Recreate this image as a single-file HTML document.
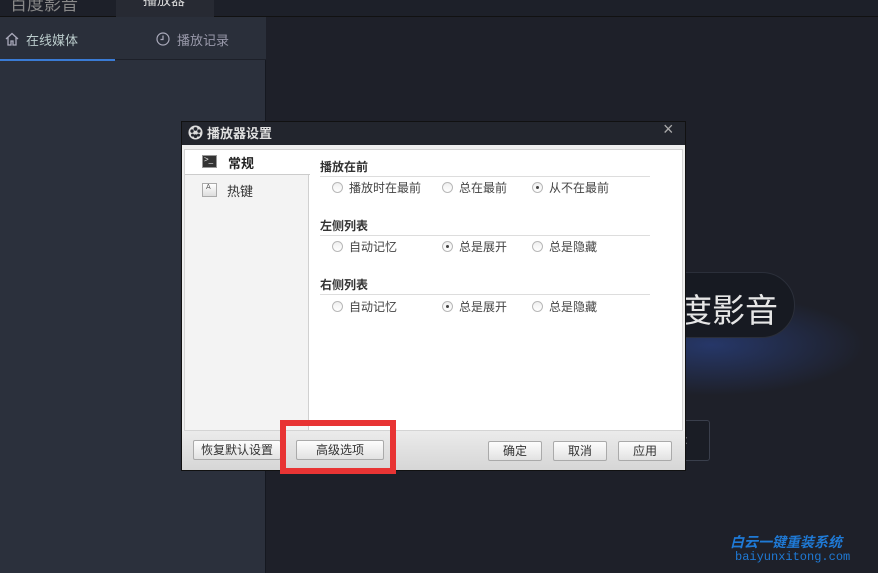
<!DOCTYPE html>
<html><head><meta charset="utf-8"><style>
*{margin:0;padding:0;box-sizing:border-box}
body{width:878px;height:573px;overflow:hidden;position:relative;background:#1e2029;font-family:"Liberation Sans","Noto Sans CJK SC",sans-serif;font-size:12px}
.a{position:absolute}
.t{white-space:nowrap}
.rad{position:absolute;width:11px;height:11px;border:1px solid #b8b8b8;border-radius:50%;background:linear-gradient(#f0f0f0,#fff)}
.rad.on::after{content:"";position:absolute;left:3px;top:3px;width:3px;height:3px;border-radius:50%;background:#444}
.lbl{position:absolute;color:#444;font-size:12px;white-space:nowrap}
.h{position:absolute;font-weight:bold;color:#333;font-size:12px}
.line{position:absolute;height:1px;background:#ddd;left:320px;width:330px}
.btn{position:absolute;height:20px;border:1px solid #aaa;border-radius:2px;background:linear-gradient(#fdfdfd,#e2e2e2);color:#333;text-align:center;line-height:18px;font-size:12px}
</style></head><body>
<div class="a" style="left:0;top:0;width:878px;height:17px;background:#1d2029;border-bottom:1px solid #111"></div>
<div class="a t" style="left:10px;top:-10px;color:#888;font-size:17px">百度影音</div>
<div class="a" style="left:116px;top:0;width:98px;height:17px;background:#272a33"></div>
<div class="a t" style="left:143px;top:-10px;color:#ddd;font-size:14px">播放器</div>
<div class="a" style="left:0;top:17px;width:266px;height:556px;background:#2b303c;border-right:1px solid #151820"></div>
<div class="a" style="left:0;top:17px;width:266px;height:43px;background:#2a2f3a;border-bottom:1px solid #1d2029"></div>
<div class="a" style="left:0;top:59px;width:115px;height:2px;background:#3a7bd5"></div>
<svg class="a" style="left:5px;top:32px" width="14" height="14" viewBox="0 0 14 14"><path d="M1 7L7 1.5 13 7M3 5.5V13h3V9h2v4h3V5.5" fill="none" stroke="#aab" stroke-width="1.3"/></svg>
<div class="a t" style="left:26px;top:30px;color:#bcc;font-size:13px">在线媒体</div>
<svg class="a" style="left:156px;top:32px" width="14" height="14" viewBox="0 0 14 14"><circle cx="7" cy="7" r="6" fill="none" stroke="#aab" stroke-width="1.2"/><path d="M7 3.5V7.5H4.5" fill="none" stroke="#aab" stroke-width="1.2"/></svg>
<div class="a t" style="left:177px;top:30px;color:#99a;font-size:13px">播放记录</div>
<div class="a" style="left:640px;top:300px;width:238px;height:100px;background:radial-gradient(ellipse at 30% 45%,rgba(50,90,200,.4),rgba(30,40,70,0) 65%)"></div>
<div class="a" style="left:600px;top:272px;width:195px;height:66px;border-radius:33px;background:#171a22;border:1px solid #2b2f3a"></div>
<div class="a t" style="left:679px;top:284px;color:#e6e6e6;font-size:33px">度影音</div>
<div class="a" style="left:640px;top:420px;width:70px;height:41px;border:1px solid #3a3f4c;border-radius:3px;background:#1a1d25"></div>
<div class="a t" style="left:684px;top:432px;color:#ccc;font-size:13px">:</div>
<div class="a t" style="left:730px;top:532px;color:#1f7ad6;font-size:14px;font-weight:bold;font-style:italic">白云一键重装系统</div>
<div class="a t" style="left:735px;top:550px;color:#1f7ad6;font-size:12px;font-family:'Liberation Mono',monospace">baiyunxitong.com</div>
<div class="a" style="left:181px;top:121px;width:505px;height:350px;background:#efefef;border:1px solid #111"></div>
<div class="a" style="left:182px;top:122px;width:503px;height:23px;background:#22252d"></div>
<svg class="a" style="left:188px;top:125px" width="15" height="15" viewBox="0 0 16 16"><circle cx="8" cy="8" r="7.5" fill="#ddd"/><circle cx="8" cy="4.2" r="2" fill="#22252d"/><circle cx="8" cy="11.8" r="2" fill="#22252d"/><circle cx="4.3" cy="6.5" r="1.8" fill="#22252d"/><circle cx="11.7" cy="6.5" r="1.8" fill="#22252d"/><circle cx="4.8" cy="10.8" r="1.6" fill="#22252d"/><circle cx="11.2" cy="10.8" r="1.6" fill="#22252d"/></svg>
<div class="a t" style="left:207px;top:123px;color:#e0e0e0;font-size:13px;font-weight:bold">播放器设置</div>
<div class="a t" style="left:663px;top:119px;color:#aaa;font-size:18px">×</div>
<div class="a" style="left:184px;top:149px;width:499px;height:282px;background:#fff;border:1px solid #d4d4d4"></div>
<div class="a" style="left:185px;top:150px;width:124px;height:280px;background:#f3f3f3;border-right:1px solid #d0d0d0"></div>
<div class="a" style="left:185px;top:150px;width:125px;height:25px;background:#fff;border-bottom:1px solid #ccc"></div>
<div class="a" style="left:202px;top:155px;width:15px;height:13px;background:#333;border:1px solid #999"></div>
<div class="a t" style="left:204px;top:155px;color:#eee;font-size:8px">&gt;_</div>
<div class="a t" style="left:228px;top:153px;color:#222;font-size:13px;font-weight:bold">常规</div>
<div class="a" style="left:202px;top:183px;width:15px;height:14px;background:linear-gradient(#fff,#ddd);border:1px solid #aaa"></div>
<div class="a t" style="left:206px;top:184px;color:#555;font-size:7px">A</div>
<div class="a t" style="left:227px;top:181px;color:#333;font-size:13px">热键</div>
<div class="h t" style="left:320px;top:158px">播放在前</div>
<div class="line" style="top:176px"></div>
<div class="rad" style="left:332px;top:182px"></div><div class="lbl" style="left:349px;top:179px">播放时在最前</div>
<div class="rad" style="left:442px;top:182px"></div><div class="lbl" style="left:459px;top:179px">总在最前</div>
<div class="rad on" style="left:532px;top:182px"></div><div class="lbl" style="left:549px;top:179px">从不在最前</div>
<div class="h t" style="left:320px;top:217px">左侧列表</div>
<div class="line" style="top:235px"></div>
<div class="rad" style="left:332px;top:241px"></div><div class="lbl" style="left:349px;top:238px">自动记忆</div>
<div class="rad on" style="left:442px;top:241px"></div><div class="lbl" style="left:459px;top:238px">总是展开</div>
<div class="rad" style="left:532px;top:241px"></div><div class="lbl" style="left:549px;top:238px">总是隐藏</div>
<div class="h t" style="left:320px;top:276px">右侧列表</div>
<div class="line" style="top:294px"></div>
<div class="rad" style="left:332px;top:301px"></div><div class="lbl" style="left:349px;top:298px">自动记忆</div>
<div class="rad on" style="left:442px;top:301px"></div><div class="lbl" style="left:459px;top:298px">总是展开</div>
<div class="rad" style="left:532px;top:301px"></div><div class="lbl" style="left:549px;top:298px">总是隐藏</div>
<div class="a" style="left:182px;top:431px;width:503px;height:39px;background:linear-gradient(#ebebeb,#d6d6d6)"></div>
<div class="btn" style="left:193px;top:440px;width:88px">恢复默认设置</div>
<div class="btn" style="left:296px;top:440px;width:88px">高级选项</div>
<div class="btn" style="left:488px;top:441px;width:54px">确定</div>
<div class="btn" style="left:553px;top:441px;width:54px">取消</div>
<div class="btn" style="left:618px;top:441px;width:54px">应用</div>
<div class="a" style="left:280px;top:420px;width:116px;height:54px;border:6px solid #e83434"></div>
</body></html>
